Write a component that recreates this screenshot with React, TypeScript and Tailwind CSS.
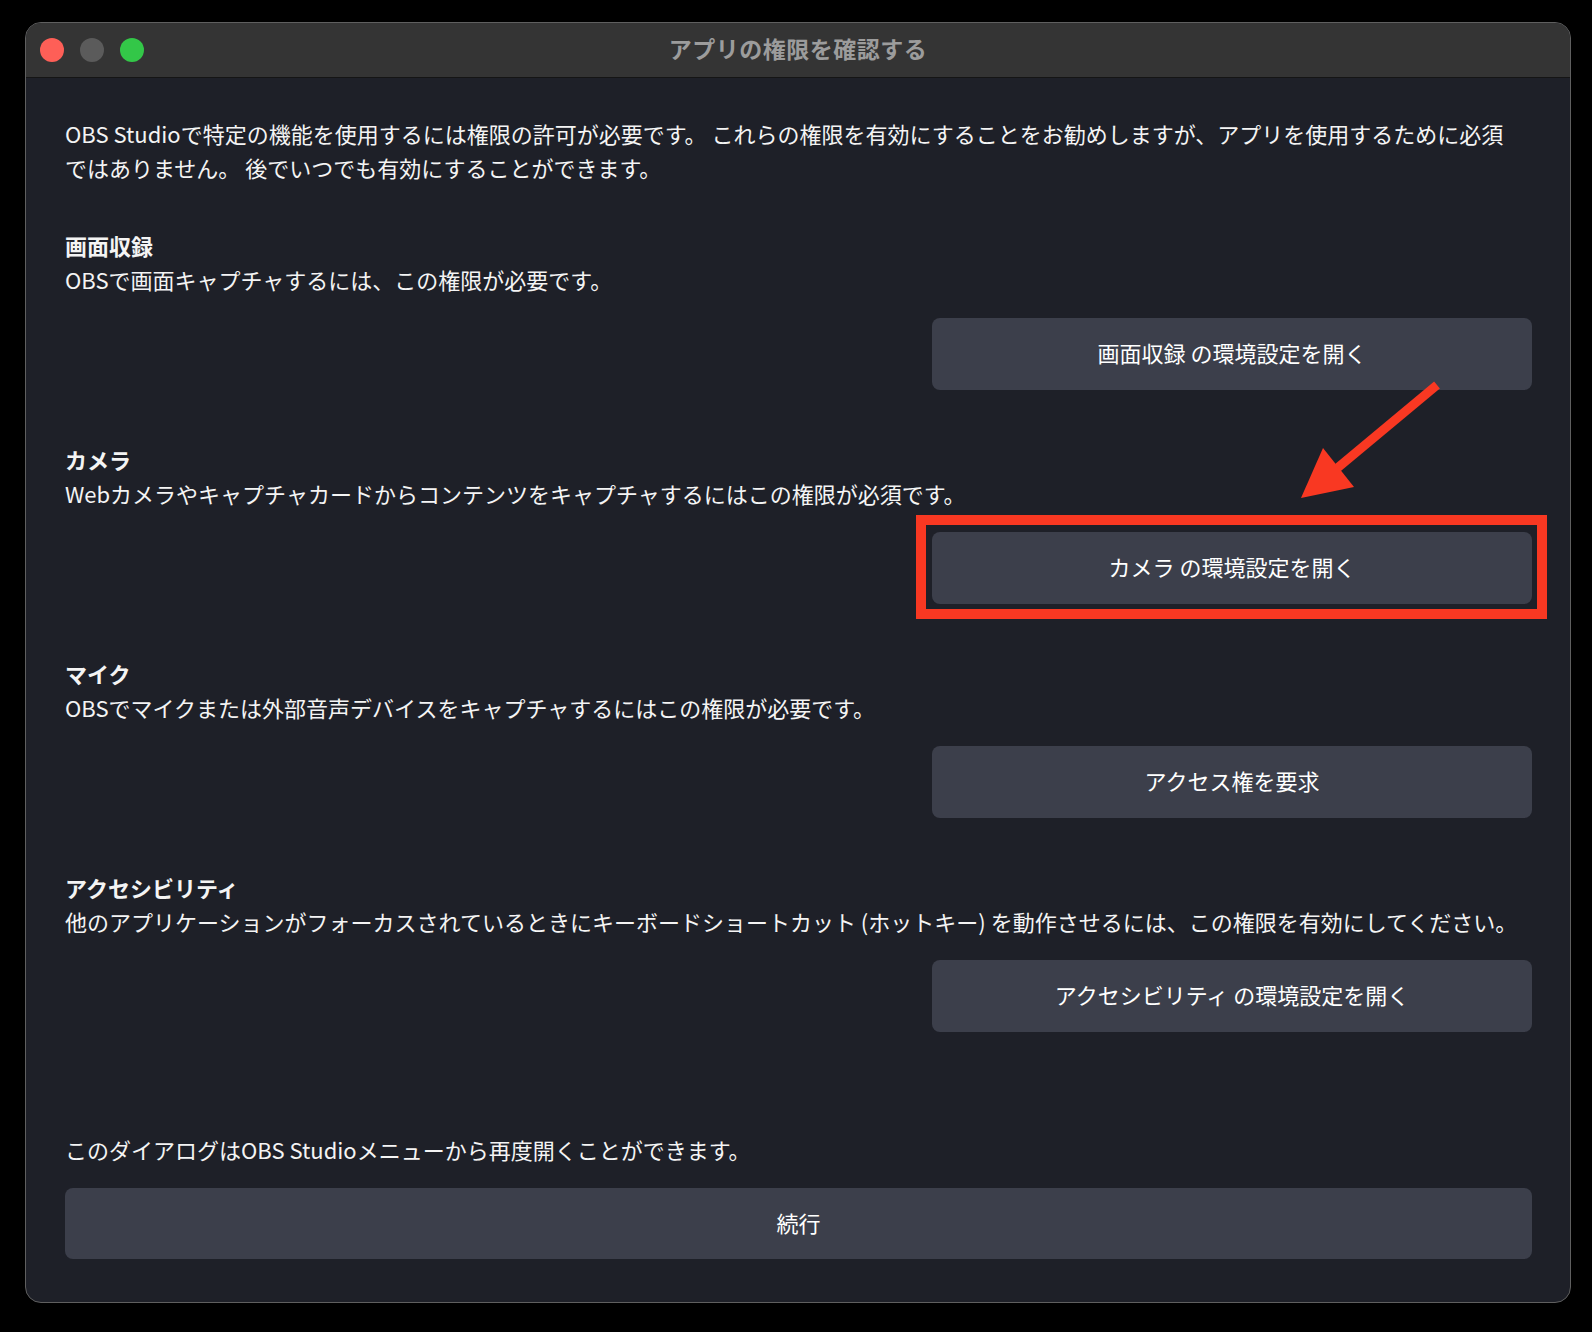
const font = {
  fontFamily: '"Noto Sans CJK JP", "Noto Sans", sans-serif',
}

type Section = {
  title: string
  description: string
  action: string
  highlight?: boolean
}

const sections: Section[] = [
  {
    title: "画面収録",
    description: "OBSで画面キャプチャするには、この権限が必要です。",
    action: "画面収録 の環境設定を開く",
  },
  {
    title: "カメラ",
    description:
      "Webカメラやキャプチャカードからコンテンツをキャプチャするにはこの権限が必須です。",
    action: "カメラ の環境設定を開く",
    highlight: true,
  },
  {
    title: "マイク",
    description:
      "OBSでマイクまたは外部音声デバイスをキャプチャするにはこの権限が必要です。",
    action: "アクセス権を要求",
  },
  {
    title: "アクセシビリティ",
    description:
      "他のアプリケーションがフォーカスされているときにキーボードショートカット (ホットキー) を動作させるには、この権限を有効にしてください。",
    action: "アクセシビリティ の環境設定を開く",
  },
]

function TrafficLights() {
  return (
    <div className="flex items-center gap-4 pl-[14px]">
      <span className="block w-6 h-6 rounded-full bg-[#fe5f57]" />
      <span className="block w-6 h-6 rounded-full bg-[#5b5b5b]" />
      <span className="block w-6 h-6 rounded-full bg-[#33c748]" />
    </div>
  )
}

function PermissionSection({ section, first }: { section: Section; first: boolean }) {
  return (
    <div className={`flex flex-col ${first ? "mt-[44px]" : "mt-[52px]"}`}>
      <div className="font-bold">{section.title}</div>
      <div>{section.description}</div>
      <div className="relative self-end mt-[22px] w-[600px]">
        <button className="w-full h-[72px] rounded-lg bg-[#3c3f4b] text-white">
          <span className="relative -top-[2px]">{section.action}</span>
        </button>
        {section.highlight && (
          <div className="absolute -left-[16px] -right-[15px] -top-[17px] -bottom-[15px] border-[10px] border-[#f93822] pointer-events-none" />
        )}
      </div>
    </div>
  )
}

function Arrow() {
  return (
    <svg
      className="absolute left-[1269px] top-[355px] pointer-events-none"
      width="150"
      height="130"
      viewBox="0 0 150 130"
    >
      <line x1="142" y1="7" x2="40" y2="92" stroke="#f93822" strokeWidth="9" />
      <polygon points="6,120 28,70 59,109" fill="#f93822" />
    </svg>
  )
}

export default function App() {
  return (
    <div className="min-h-[1332px] bg-black pt-[22px] pl-[25px]" style={font}>
      <div className="relative w-[1546px] rounded-[16px] border border-[#5f5f5f] bg-[#1e2028] overflow-hidden">
        {/* Title bar */}
        <div className="grid grid-cols-[1fr_auto_1fr] items-center h-[55px] bg-[#343434] border-b border-[#151515]">
          <TrafficLights />
          <div className="pb-[4px] text-[23px] font-bold text-[#9c9c9c] tracking-[0.5px]">
            アプリの権限を確認する
          </div>
          <div />
        </div>

        {/* Body */}
        <div className="flex flex-col pl-[39px] pr-[38px] pt-[38px] pb-[43px] text-[22px] leading-[34px] text-[#f4f4f4]">
          <p>
            OBS Studioで特定の機能を使用するには権限の許可が必要です。 これらの権限を有効にすることをお勧めしますが、アプリを使用するために必須
            <br />
            ではありません。 後でいつでも有効にすることができます。
          </p>

          {sections.map((s, i) => (
            <PermissionSection key={s.title} section={s} first={i === 0} />
          ))}

          <div className="mt-[100px]">
            このダイアログはOBS Studioメニューから再度開くことができます。
          </div>
          <button className="mt-[22px] w-full h-[71px] rounded-lg bg-[#3c3f4b] text-white">
            <span className="relative -top-[2px]">続行</span>
          </button>
        </div>

        <Arrow />
      </div>
    </div>
  )
}
